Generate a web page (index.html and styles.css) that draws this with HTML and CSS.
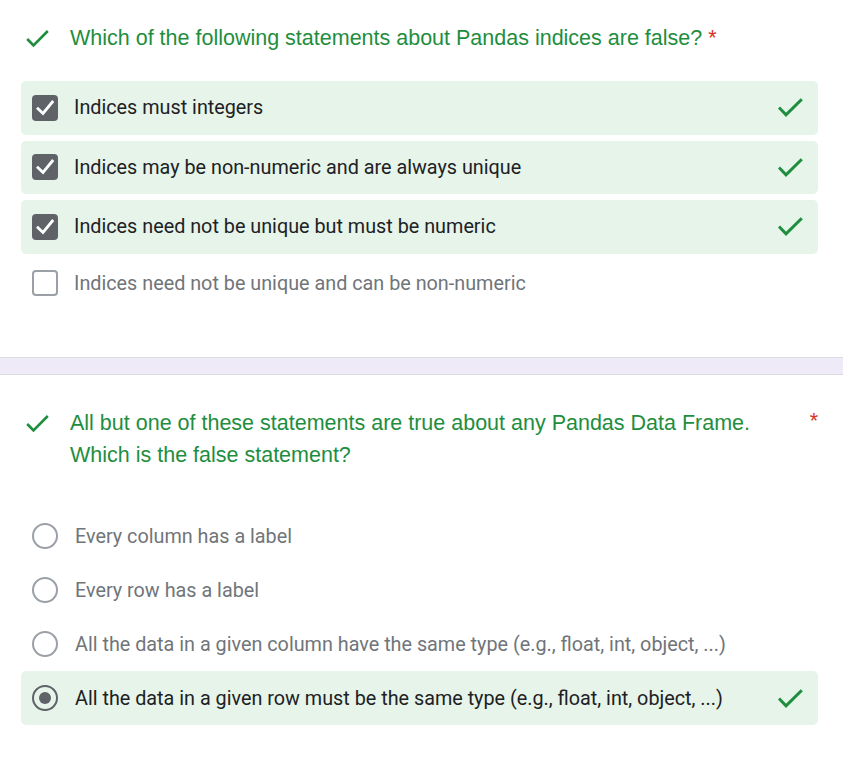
FILE: index.html
```html
<!DOCTYPE html>
<html>
<head>
<meta charset="utf-8">
<link rel="stylesheet" href="styles.css">
</head>
<body>
<section class="question q1">
  <div class="q-title">
    <svg class="title-check" viewBox="0 0 23 19" width="23" height="19"><polyline points="1.2,10 7.5,16.5 21.8,2" fill="none" stroke="#1e8e3e" stroke-width="2.6"/></svg>
    <div class="title-text">Which of the following statements about Pandas indices are false? <span class="req">*</span></div>
  </div>
  <div class="options checks">
    <div class="opt correct">
      <span class="box checked"><svg viewBox="0 0 26 26" width="26" height="26"><polyline points="5,12.8 11,18.4 21.2,6" fill="none" stroke="#fff" stroke-width="2.8"/></svg></span>
      <span class="label">Indices must integers</span>
      <svg class="ok" viewBox="0 0 25 19" width="25" height="19"><polyline points="1,9.5 8,16.8 23.8,1.2" fill="none" stroke="#1e8e3e" stroke-width="3"/></svg>
    </div>
    <div class="opt correct">
      <span class="box checked"><svg viewBox="0 0 26 26" width="26" height="26"><polyline points="5,12.8 11,18.4 21.2,6" fill="none" stroke="#fff" stroke-width="2.8"/></svg></span>
      <span class="label">Indices may be non-numeric and are always unique</span>
      <svg class="ok" viewBox="0 0 25 19" width="25" height="19"><polyline points="1,9.5 8,16.8 23.8,1.2" fill="none" stroke="#1e8e3e" stroke-width="3"/></svg>
    </div>
    <div class="opt correct">
      <span class="box checked"><svg viewBox="0 0 26 26" width="26" height="26"><polyline points="5,12.8 11,18.4 21.2,6" fill="none" stroke="#fff" stroke-width="2.8"/></svg></span>
      <span class="label">Indices need not be unique but must be numeric</span>
      <svg class="ok" viewBox="0 0 25 19" width="25" height="19"><polyline points="1,9.5 8,16.8 23.8,1.2" fill="none" stroke="#1e8e3e" stroke-width="3"/></svg>
    </div>
    <div class="opt plain">
      <span class="box"></span>
      <span class="label">Indices need not be unique and can be non-numeric</span>
    </div>
  </div>
</section>
<div class="separator"></div>
<section class="question q2">
  <div class="q-title">
    <svg class="title-check" viewBox="0 0 23 19" width="23" height="19"><polyline points="1.2,10 7.5,16.5 21.8,2" fill="none" stroke="#1e8e3e" stroke-width="2.6"/></svg>
    <div class="title-text wrap">All but one of these statements are true about any Pandas Data Frame. Which is the false statement?</div>
    <span class="req side">*</span>
  </div>
  <div class="options radios">
    <div class="opt plain">
      <span class="radio"></span>
      <span class="label">Every column has a label</span>
    </div>
    <div class="opt plain">
      <span class="radio"></span>
      <span class="label">Every row has a label</span>
    </div>
    <div class="opt plain">
      <span class="radio"></span>
      <span class="label">All the data in a given column have the same type (e.g., float, int, object, ...)</span>
    </div>
    <div class="opt correct">
      <span class="radio selected"></span>
      <span class="label">All the data in a given row must be the same type (e.g., float, int, object, ...)</span>
      <svg class="ok" viewBox="0 0 25 19" width="25" height="19"><polyline points="1,9.5 8,16.8 23.8,1.2" fill="none" stroke="#1e8e3e" stroke-width="3"/></svg>
    </div>
  </div>
</section>
</body>
</html>
```
FILE: styles.css
```css
html, body {
  margin: 0;
  padding: 0;
  background: #ffffff;
}

body {
  width: 843px;
  height: 760px;
  overflow: hidden;
  font-family: Roboto, "Liberation Sans", Arial, sans-serif;
}

.question {
  padding: 0 25px 0 21px;
}

.q1 {
  padding-top: 22px;
  padding-bottom: 50px;
}

.q2 {
  padding-top: 32px;
}

.q-title {
  display: flex;
  align-items: flex-start;
  font-family: "Liberation Sans", Arial, sans-serif;
  font-size: 21.5px;
  line-height: 32px;
  color: #1e8e3e;
}

.title-check {
  flex: none;
  margin: 7px 0 0 5px;
}

.title-text {
  margin-left: 21px;
}

.title-text.wrap {
  width: 700px;
}

.req {
  color: #d93025;
}

.req.side {
  margin-left: 42px;
  line-height: 32px;
  margin-top: -2px;
}

.options {
  display: flex;
  flex-direction: column;
}

.checks {
  margin-top: 27px;
  gap: 6px;
}

.radios {
  margin-top: 38.5px;
}

.opt {
  display: flex;
  align-items: center;
  height: 53.5px;
  padding: 0 15px 0 11px;
  border-radius: 5px;
  font-size: 19.8px;
}

.radios .opt {
  height: 54px;
}

.checks .opt.plain {
  height: 47px;
}

.opt.correct {
  background: #e6f4ea;
  color: #202124;
}

.opt.plain {
  color: #70757a;
}

.label {
  flex: 1;
  margin-left: 16px;
}

.radios .label {
  margin-left: 17px;
}

.box {
  flex: none;
  width: 26px;
  height: 26px;
  box-sizing: border-box;
  border: 2.5px solid #9aa0a6;
  border-radius: 4px;
  display: flex;
}

.box.checked {
  border: none;
  background: #5f6368;
}

.radio {
  flex: none;
  width: 26px;
  height: 26px;
  box-sizing: border-box;
  border: 2.5px solid #9aa0a6;
  border-radius: 50%;
  display: flex;
  align-items: center;
  justify-content: center;
}

.radio.selected {
  border-color: #5f6368;
}

.radio.selected::after {
  content: "";
  width: 12px;
  height: 12px;
  border-radius: 50%;
  background: #5f6368;
}

.ok {
  flex: none;
}

.separator {
  height: 16px;
  background: #efeaf7;
  border-top: 1px solid #dadce0;
  border-bottom: 1px solid #dadce0;
}
```
